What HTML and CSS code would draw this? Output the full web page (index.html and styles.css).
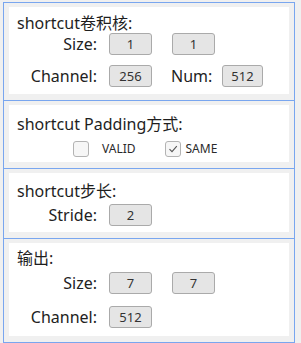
FILE: index.html
```html
<!DOCTYPE html>
<html>
<head>
<meta charset="utf-8">
<link rel="stylesheet" href="styles.css">
</head>
<body>
<div class="frame">
  <section class="sec">
    <div class="panel p1">
      <div class="title">shortcut卷积核:</div>
      <div class="row">
        <span class="lbl">Size:</span>
        <span class="box">1</span>
        <span class="box second">1</span>
      </div>
      <div class="row gap10">
        <span class="lbl">Channel:</span>
        <span class="box">256</span>
        <span class="lbl2">Num:</span>
        <span class="box num">512</span>
      </div>
    </div>
  </section>
  <section class="sec">
    <div class="panel p2">
      <div class="title">shortcut Padding方式:</div>
      <div class="checks">
        <span class="cb"></span>
        <span class="cbl valid">VALID</span>
        <span class="cb checked"><svg width="12" height="12" viewBox="0 0 12 12"><path d="M2.5 6.2 L5 8.7 L9.8 3.2" fill="none" stroke="#555" stroke-width="1.1"/></svg></span>
        <span class="cbl same">SAME</span>
      </div>
    </div>
  </section>
  <section class="sec">
    <div class="panel p3">
      <div class="title">shortcut步长:</div>
      <div class="row gap3">
        <span class="lbl">Stride:</span>
        <span class="box">2</span>
      </div>
    </div>
  </section>
  <section class="sec last">
    <div class="panel p4">
      <div class="title">输出:</div>
      <div class="row gap4">
        <span class="lbl">Size:</span>
        <span class="box">7</span>
        <span class="box second">7</span>
      </div>
      <div class="row gap12">
        <span class="lbl">Channel:</span>
        <span class="box">512</span>
      </div>
    </div>
  </section>
</div>
</body>
</html>
```
FILE: styles.css
```css
* { box-sizing: border-box; }
html, body { margin: 0; padding: 0; }
body {
  background: #f0f0f0;
  font-family: "Noto Sans", "Noto Sans CJK SC", sans-serif;
  color: #1e1e1e;
  width: 301px;
  height: 343px;
  overflow: hidden;
}
.frame {
  margin: 2px 0 0 3px;
  width: 292px;
  border-left: 1px solid #79a6ef;
  border-right: 1px solid #79a6ef;
}
.sec {
  border-top: 1px solid #79a6ef;
  padding: 4px 5px 6px 5px;
}
.sec.last { border-bottom: 1px solid #79a6ef; }
.panel {
  background: #fff;
  padding-left: 8px;
}
.p1 { padding-top: 6px; padding-bottom: 7px; }
.p2 { padding-top: 9px; padding-bottom: 5px; }
.p3 { padding-top: 8px; padding-bottom: 6px; }
.p4 { padding-top: 5px; padding-bottom: 8px; }
.title {
  font-size: 16px;
  line-height: 20px;
  height: 20px;
  white-space: nowrap;
}
.row {
  display: flex;
  align-items: center;
  height: 22px;
  font-size: 16px;
}
.gap10 { margin-top: 10px; }
.gap3 { margin-top: 3px; }
.gap4 { margin-top: 4px; }
.gap12 { margin-top: 12px; }
.lbl {
  width: 80px;
  text-align: right;
  line-height: 20px;
  margin-right: 12px;
  color: #222;
}
.lbl2 {
  margin-left: 19px;
  width: 40px;
  line-height: 20px;
  margin-right: 11px;
  color: #222;
}
.box {
  width: 43px;
  height: 22px;
  border: 1px solid #aaaaaa;
  border-radius: 3px;
  background: #e5e5e5;
  font-size: 13px;
  line-height: 20px;
  text-align: center;
  color: #333;
}
.box.second { margin-left: 20px; }
.box.num { width: 41px; }
.checks {
  display: flex;
  align-items: center;
  height: 16px;
  margin-top: 7px;
  padding-left: 56px;
}
.cb {
  width: 16px;
  height: 16px;
  border: 1px solid #b3b3b3;
  border-radius: 3px;
  background: #f6f6f6;
  display: flex;
  align-items: center;
  justify-content: center;
}
.cbl {
  font-size: 12px;
  line-height: 16px;
  color: #2a2a2a;
}
.valid { margin-left: 13px; margin-right: 29px; }
.same { margin-left: 5px; }
```
